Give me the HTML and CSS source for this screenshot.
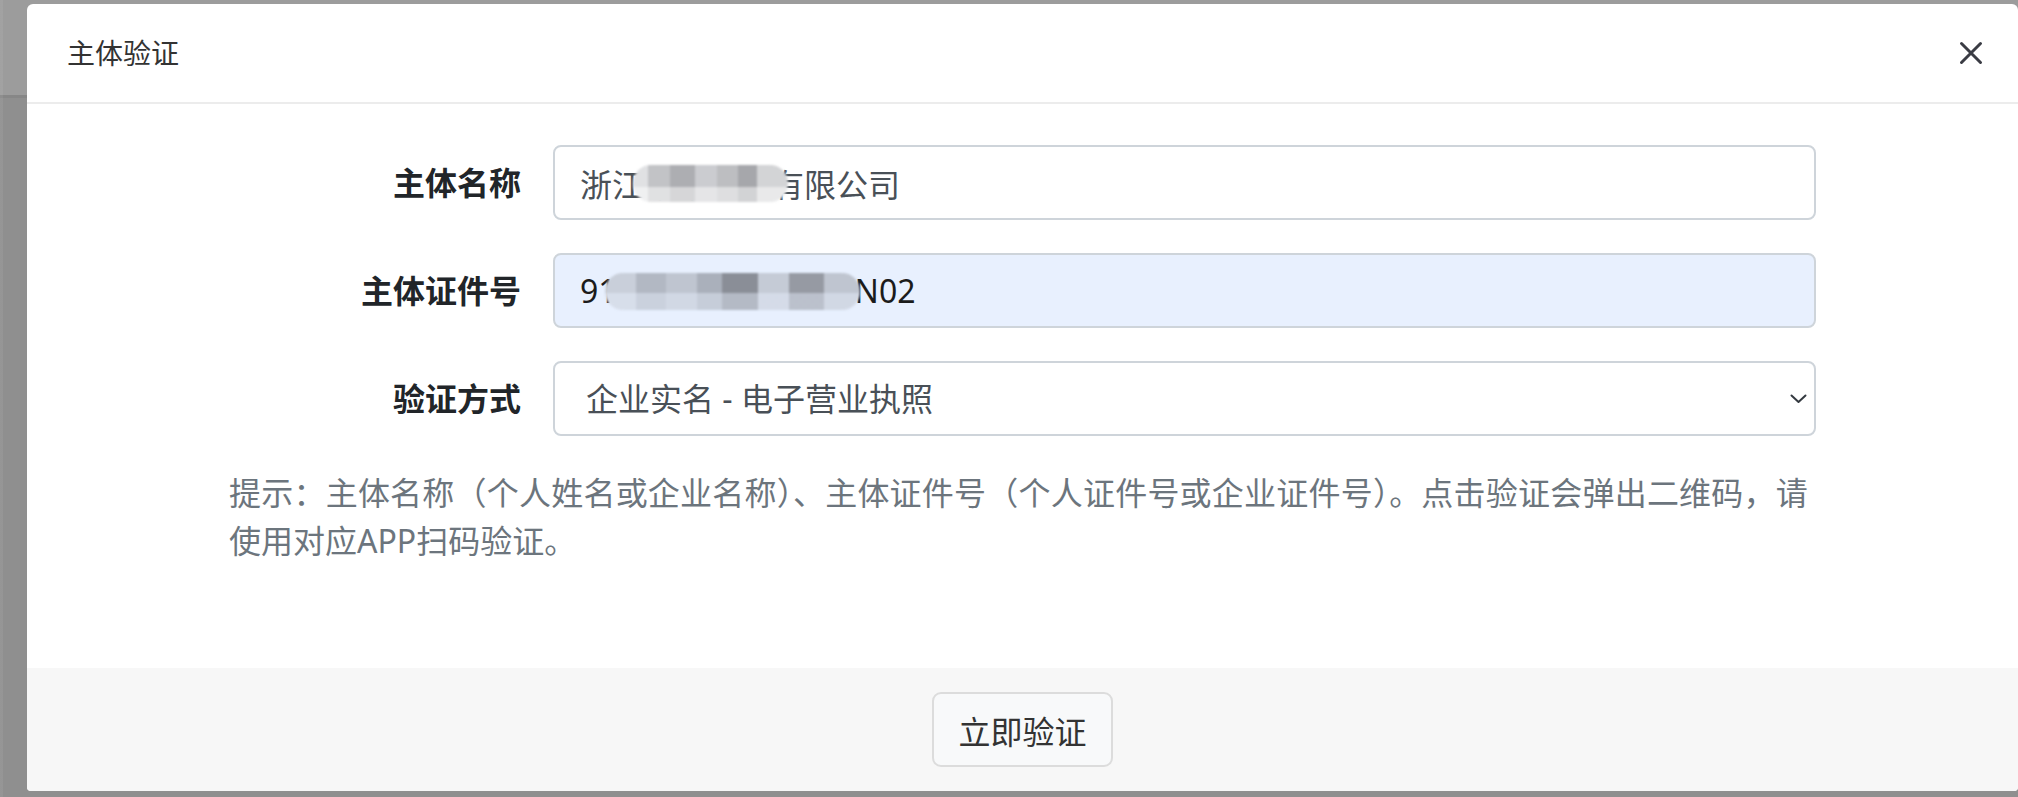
FILE: index.html
```html
<!DOCTYPE html>
<html lang="zh-CN">
<head>
    <meta charset="UTF-8">
    <title>主体验证</title>
    <link rel="stylesheet" href="styles.css">
</head>
<body>
    <div class="modal">
        <div class="modal-header">
            <h5 class="modal-title">主体验证</h5>
            <button class="btn-close" type="button" aria-label="关闭">
                <svg width="24" height="24" viewBox="0 0 24 24">
                    <path d="M2.5 2.5L21.5 21.5M21.5 2.5L2.5 21.5" stroke="#3a3c44" stroke-width="3" stroke-linecap="round" fill="none"/>
                </svg>
            </button>
        </div>

        <div class="modal-body">
            <form class="verify-form">
                <label class="form-label" for="name">主体名称</label>
                <div class="field">
                    <input class="form-control" id="name" type="text" value="浙江某某科技有限公司">
                    <span class="mask mask-name"></span>
                </div>

                <label class="form-label" for="code">主体证件号</label>
                <div class="field">
                    <input class="form-control autofilled" id="code" type="text" value="913301060000000N02">
                    <span class="mask mask-code"></span>
                </div>

                <label class="form-label" for="mode">验证方式</label>
                <div class="field">
                    <select class="form-control form-select" id="mode">
                        <option>企业实名 - 电子营业执照</option>
                    </select>
                    <svg class="select-arrow" width="17" height="10" viewBox="0 0 17 10">
                        <path d="M1.5 1.5L8.5 8L15.5 1.5" stroke="#343a40" stroke-width="2" fill="none" stroke-linecap="round" stroke-linejoin="round"/>
                    </svg>
                </div>
            </form>

            <p class="hint">
                <span class="hint-first">提示：主体名称（个人姓名或企业名称）、主体证件号（个人证件号或企业证件号）。点击验证会弹出二维码，请</span>
                <span>使用对应APP扫码验证。</span>
            </p>
        </div>

        <div class="modal-footer">
            <button class="btn" type="button">立即验证</button>
        </div>
    </div>
</body>
</html>
```

FILE: styles.css
```css
body
{
    margin: 0;
    height: 797px;
    overflow: hidden;
    box-sizing: border-box;
    padding: 4px 0 0 27px;
    font-family: "Noto Sans", "Noto Sans CJK SC", sans-serif;
    background:
        linear-gradient(to right, rgba(255, 255, 255, 0.06) 0 3px, transparent 3px),
        linear-gradient(#9c9c9c 0 95px, #878787 95px 98px, #8f8f8f 98px);
}

.modal
{
    width: 1991px;
    background-color: #fff;
    border-radius: 6px 6px 4px 4px;
    overflow: hidden;
}

.modal-header
{
    display: flex;
    align-items: center;
    justify-content: space-between;
    height: 98px;
    padding: 0 35px 0 40px;
    border-bottom: 2px solid #ececec;
}

.modal-title
{
    margin: 0;
    font-size: 28px;
    font-weight: 400;
    line-height: 1.5;
    color: #333;
}

.btn-close
{
    display: flex;
    width: 24px;
    height: 24px;
    padding: 0;
    border: none;
    background: none;
    cursor: pointer;
}

.modal-body
{
    padding: 41px 0 103px;
}

.verify-form
{
    width: 1587px;
    margin: 0 auto;
    display: grid;
    grid-template-columns: 292px 1263px;
    column-gap: 32px;
    row-gap: 33px;
    align-items: center;
}

.form-label
{
    text-align: right;
    font-size: 32px;
    font-weight: 700;
    line-height: 1.5;
    color: #212529;
}

.field
{
    position: relative;
}

.form-control
{
    display: block;
    width: 100%;
    height: 75px;
    box-sizing: border-box;
    padding: 0 25px;
    font: inherit;
    font-size: 32px;
    color: #495057;
    background-color: #fff;
    border: 2px solid #ced4da;
    border-radius: 8px;
    outline: none;
}

.form-control.autofilled
{
    background-color: #e8f0fe;
    color: #1b1b1b;
}

.form-select
{
    appearance: none;
    padding-left: 31px;
}

.select-arrow
{
    position: absolute;
    right: 9px;
    top: 50%;
    margin-top: -5px;
}

.mask
{
    position: absolute;
    top: 20px;
    height: 37px;
    border-radius: 18px;
    filter: blur(1.2px);
}

.mask-name
{
    left: 80px;
    width: 155px;
    background:
        linear-gradient(transparent 60%, rgba(255, 255, 255, 0.5) 60%),
        linear-gradient(90deg, #e0e1e3 0 10%, #c2c3c6 10% 24%, #adaeb2 24% 40%, #cbccd0 40% 54%, #bdbec1 54% 68%, #a6a7ab 68% 80%, #d3d4d6 80%);
}

.mask-code
{
    left: 52px;
    width: 255px;
    background:
        linear-gradient(transparent 55%, rgba(232, 240, 254, 0.45) 55%),
        linear-gradient(90deg, #c9cfda 0 12%, #b2b8c3 12% 24%, #bfc5d0 24% 36%, #aab0bb 36% 46%, #8a8e97 46% 60%, #c5cbd6 60% 72%, #969aa3 72% 86%, #bfc5d0 86%);
}

.hint
{
    width: 1587px;
    margin: 33px auto 0;
    font-size: 32px;
    line-height: 48px;
    color: #6c757d;
    white-space: nowrap;
}

.hint span
{
    display: block;
}

.hint-first
{
    letter-spacing: 0.22px;
}

.modal-footer
{
    display: flex;
    justify-content: center;
    padding: 24px 0;
    background-color: #f7f7f7;
}

.btn
{
    height: 75px;
    padding: 0 24px;
    font: inherit;
    font-size: 32px;
    color: #333;
    background-color: #f8f9fa;
    border: 2px solid #dcdcdc;
    border-radius: 9px;
    cursor: pointer;
}
```
